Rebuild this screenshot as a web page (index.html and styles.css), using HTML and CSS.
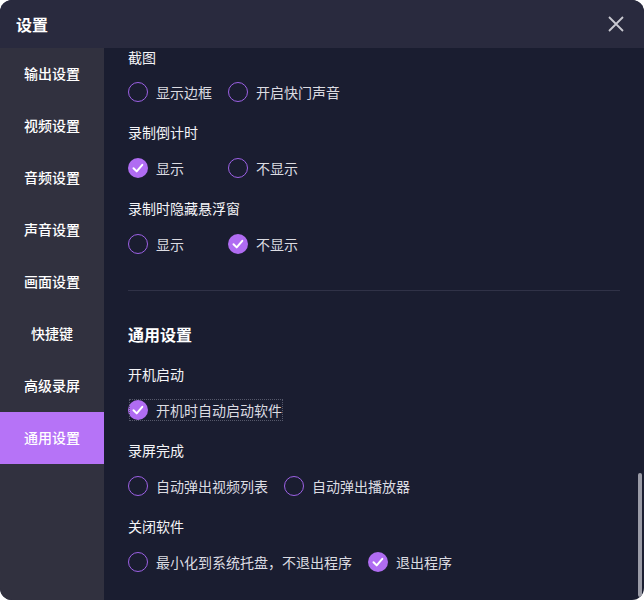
FILE: index.html
```html
<!DOCTYPE html>
<html lang="zh">
<head>
    <meta charset="UTF-8">
    <title>设置</title>
    <link rel="stylesheet" href="styles.css">
</head>
<body>
    <div class="window">
        <header class="titlebar">
            <h1>设置</h1>
            <button class="close" aria-label="关闭">
                <svg width="16" height="16" viewBox="0 0 16 16"><path d="M1 1L15 15M15 1L1 15" stroke="#c9c9d1" stroke-width="1.8" fill="none"/></svg>
            </button>
        </header>

        <div class="layout">
            <nav class="sidebar">
                <div class="nav-item">输出设置</div>
                <div class="nav-item">视频设置</div>
                <div class="nav-item">音频设置</div>
                <div class="nav-item">声音设置</div>
                <div class="nav-item">画面设置</div>
                <div class="nav-item">快捷键</div>
                <div class="nav-item">高级录屏</div>
                <div class="nav-item active">通用设置</div>
            </nav>

            <main class="content">
                <div class="group first">
                    <div class="label">截图</div>
                    <div class="options">
                        <div class="option"><span class="radio"></span>显示边框</div>
                        <div class="option"><span class="radio"></span>开启快门声音</div>
                    </div>
                </div>
                <div class="group">
                    <div class="label">录制倒计时</div>
                    <div class="options">
                        <div class="option"><span class="radio checked"><svg viewBox="0 0 20 20"><path d="M5.5 10.2l3.2 3.2 5.6-6.6"/></svg></span>显示</div>
                        <div class="option"><span class="radio"></span>不显示</div>
                    </div>
                </div>
                <div class="group">
                    <div class="label">录制时隐藏悬浮窗</div>
                    <div class="options">
                        <div class="option"><span class="radio"></span>显示</div>
                        <div class="option"><span class="radio checked"><svg viewBox="0 0 20 20"><path d="M5.5 10.2l3.2 3.2 5.6-6.6"/></svg></span>不显示</div>
                    </div>
                </div>

                <hr class="divider">

                <h2 class="section-title">通用设置</h2>
                <div class="group">
                    <div class="label">开机启动</div>
                    <div class="options">
                        <div class="option focused"><span class="radio checked"><svg viewBox="0 0 20 20"><path d="M5.5 10.2l3.2 3.2 5.6-6.6"/></svg></span>开机时自动启动软件</div>
                    </div>
                </div>
                <div class="group">
                    <div class="label">录屏完成</div>
                    <div class="options">
                        <div class="option"><span class="radio"></span>自动弹出视频列表</div>
                        <div class="option"><span class="radio"></span>自动弹出播放器</div>
                    </div>
                </div>
                <div class="group">
                    <div class="label">关闭软件</div>
                    <div class="options">
                        <div class="option"><span class="radio"></span>最小化到系统托盘，不退出程序</div>
                        <div class="option"><span class="radio checked"><svg viewBox="0 0 20 20"><path d="M5.5 10.2l3.2 3.2 5.6-6.6"/></svg></span>退出程序</div>
                    </div>
                </div>

                <div class="scrollbar"></div>
            </main>
        </div>
    </div>
</body>
</html>
```

FILE: styles.css
```css
body {
    margin: 0;
    background-color: #ffffff;
    font-family: "Noto Sans CJK SC", "Noto Sans", sans-serif;
}

.window {
    width: 644px;
    height: 600px;
    border-radius: 12px;
    overflow: hidden;
    background-color: #1a1d30;
    display: flex;
    flex-direction: column;
}

.titlebar {
    height: 48px;
    flex-shrink: 0;
    background-color: #292a3e;
    display: flex;
    align-items: center;
    justify-content: space-between;
    padding: 0 16px;
}
.titlebar h1 {
    margin: 0;
    font-size: 16px;
    font-weight: bold;
    color: #ffffff;
}
.close {
    background: none;
    border: none;
    padding: 0;
    width: 16px;
    height: 16px;
    margin-right: 4px;
    margin-top: -1px;
    display: flex;
}

.layout {
    flex: 1;
    display: flex;
    min-height: 0;
}

.sidebar {
    width: 104px;
    flex-shrink: 0;
    background-color: #31313f;
}
.nav-item {
    height: 52px;
    display: flex;
    align-items: center;
    justify-content: center;
    font-size: 14px;
    font-weight: 500;
    color: #ffffff;
    padding-bottom: 2px;
    box-sizing: border-box;
}
.nav-item.active {
    background-color: #b673f7;
}

.content {
    flex: 1;
    position: relative;
    padding: 0 24px;
    overflow: hidden;
}

.group {
    margin-bottom: 18px;
}
.label {
    height: 20px;
    line-height: 20px;
    font-size: 14px;
    color: #f4f4f7;
    margin-bottom: 14px;
}
.group.first .label {
    height: 18px;
    line-height: 18px;
    margin-bottom: 14px;
}
.options {
    display: flex;
    gap: 16px;
    height: 24px;
}
.option {
    min-width: 84px;
    display: flex;
    align-items: center;
    gap: 8px;
    font-size: 14px;
    color: #dcdce2;
    white-space: nowrap;
}
.option.focused {
    outline: 1px dotted #55586a;
    outline-offset: -2px;
    padding-right: 2px;
}

.radio {
    width: 20px;
    height: 20px;
    box-sizing: border-box;
    border: 1.5px solid #9d61e6;
    border-radius: 50%;
    flex-shrink: 0;
    display: flex;
}
.radio.checked {
    border: none;
    background-color: #b06cf2;
}
.radio svg {
    width: 20px;
    height: 20px;
}
.radio svg path {
    fill: none;
    stroke: #ffffff;
    stroke-width: 2;
    stroke-linecap: round;
    stroke-linejoin: round;
}

.divider {
    border: none;
    border-top: 1px solid #303247;
    margin: 34px 0 33px;
}

.section-title {
    margin: 0 0 20px;
    height: 20px;
    line-height: 20px;
    font-size: 16px;
    font-weight: bold;
    color: #ffffff;
}

.scrollbar {
    position: absolute;
    right: 2px;
    top: 425px;
    width: 4px;
    height: 124px;
    border-radius: 2px;
    background-color: #9a9ba6;
}
```
